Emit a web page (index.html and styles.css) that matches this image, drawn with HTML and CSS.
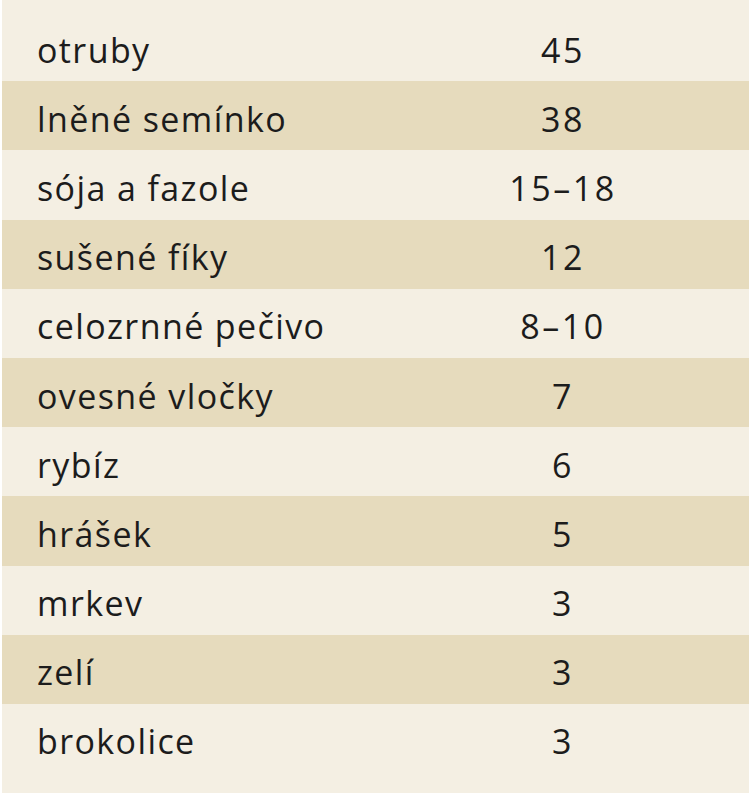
FILE: index.html
```html
<!DOCTYPE html>
<html lang="cs">
<head>
<meta charset="utf-8">
<link rel="stylesheet" href="styles.css">
</head>
<body>
<div class="panel">
  <table class="fiber">
    <tbody>
      <tr><td class="name">otruby</td><td class="val">45</td></tr>
      <tr class="alt"><td class="name">lněné semínko</td><td class="val">38</td></tr>
      <tr><td class="name">sója a fazole</td><td class="val">15–18</td></tr>
      <tr class="alt"><td class="name">sušené fíky</td><td class="val">12</td></tr>
      <tr><td class="name">celozrnné pečivo</td><td class="val">8–10</td></tr>
      <tr class="alt"><td class="name">ovesné vločky</td><td class="val">7</td></tr>
      <tr><td class="name">rybíz</td><td class="val">6</td></tr>
      <tr class="alt"><td class="name">hrášek</td><td class="val">5</td></tr>
      <tr><td class="name">mrkev</td><td class="val">3</td></tr>
      <tr class="alt"><td class="name">zelí</td><td class="val">3</td></tr>
      <tr><td class="name">brokolice</td><td class="val">3</td></tr>
    </tbody>
  </table>
</div>
</body>
</html>
```
FILE: styles.css
```css
html, body {
  margin: 0;
  padding: 0;
  background: #ffffff;
}
.panel {
  margin: 0 2px;
  width: 747px;
  padding: 12px 0 20px;
  background: #f4efe3;
}
.fiber {
  width: 100%;
  border-collapse: collapse;
  font-family: "Open Sans", "DejaVu Sans", sans-serif;
  font-size: 34px;
  letter-spacing: 1.4px;
  color: #1c1c1c;
}
.fiber tr {
  height: 69.2px;
}
.fiber tr.alt {
  background: #e6dbbd;
}
.fiber td {
  padding: 6px 0 0;
  vertical-align: middle;
  line-height: 40px;
}
.fiber td.name {
  width: 373px;
  padding-left: 35px;
  box-sizing: border-box;
}
.fiber td.val {
  text-align: center;
  letter-spacing: 2.5px;
  padding-left: 2px;
}
```
